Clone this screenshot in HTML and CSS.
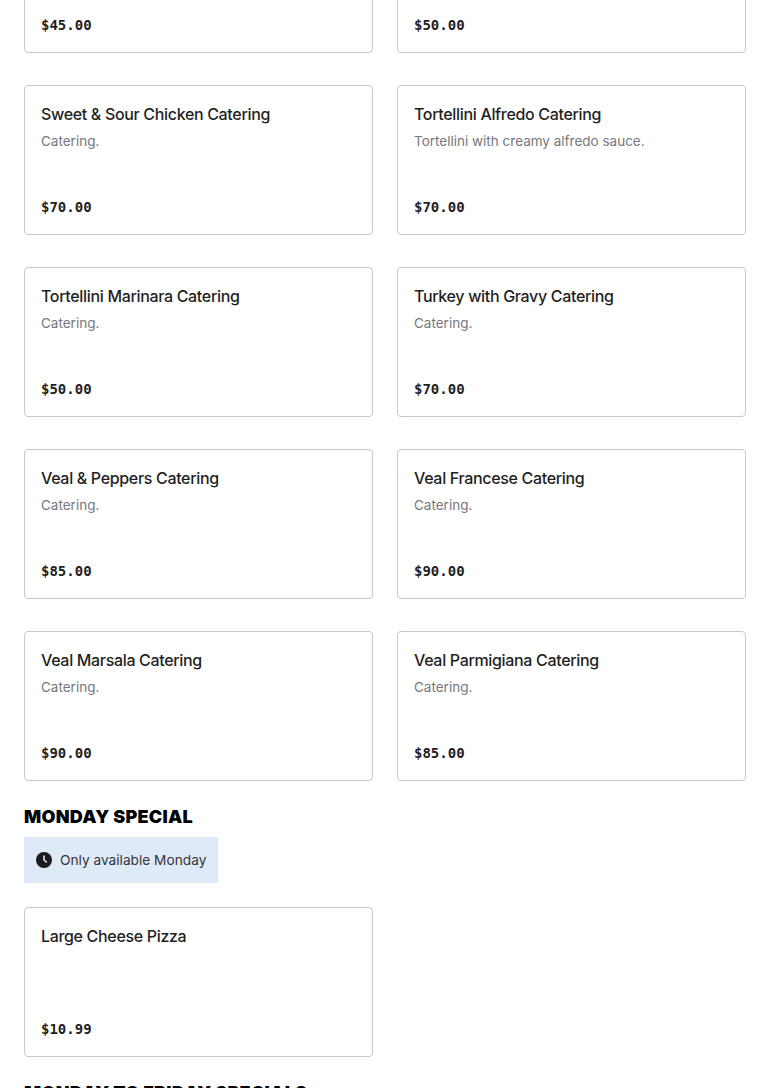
FILE: index.html
```html
<!DOCTYPE html>
<html>
  <head>
    <meta charset="utf-8">
    <title>Menu</title>
    <link rel="stylesheet" href="styles.css">
  </head>
  <body>
    <div id="menu">
      <div class="items">
        <div class="item"><span class="price">$45.00</span></div>
        <div class="item"><span class="price">$50.00</span></div>
        <div class="item">
          <h3>Sweet &amp; Sour Chicken Catering</h3>
          <p>Catering.</p>
          <span class="price">$70.00</span>
        </div>
        <div class="item">
          <h3>Tortellini Alfredo Catering</h3>
          <p>Tortellini with creamy alfredo sauce.</p>
          <span class="price">$70.00</span>
        </div>
        <div class="item">
          <h3>Tortellini Marinara Catering</h3>
          <p>Catering.</p>
          <span class="price">$50.00</span>
        </div>
        <div class="item">
          <h3>Turkey with Gravy Catering</h3>
          <p>Catering.</p>
          <span class="price">$70.00</span>
        </div>
        <div class="item">
          <h3>Veal &amp; Peppers Catering</h3>
          <p>Catering.</p>
          <span class="price">$85.00</span>
        </div>
        <div class="item">
          <h3>Veal Francese Catering</h3>
          <p>Catering.</p>
          <span class="price">$90.00</span>
        </div>
        <div class="item">
          <h3>Veal Marsala Catering</h3>
          <p>Catering.</p>
          <span class="price">$90.00</span>
        </div>
        <div class="item">
          <h3>Veal Parmigiana Catering</h3>
          <p>Catering.</p>
          <span class="price">$85.00</span>
        </div>
      </div>

      <h2>MONDAY SPECIAL</h2>
      <div class="notice">
        <svg class="clock" viewBox="0 0 16 16" width="16" height="16">
          <circle cx="8" cy="8" r="8" fill="#1b1b1f"/>
          <path d="M8 3.6V8l2.9 2.5" fill="none" stroke="#dfeaf8" stroke-width="1.6"/>
        </svg>
        <span>Only available Monday</span>
      </div>
      <div class="items">
        <div class="item">
          <h3>Large Cheese Pizza</h3>
          <span class="price">$10.99</span>
        </div>
      </div>

      <h2>MONDAY TO FRIDAY SPECIALS</h2>
    </div>
  </body>
</html>
```

FILE: styles.css
```css
*, *::before, *::after {
  padding: 0;
  margin: 0;
  box-sizing: border-box;
}

html, body {height: 1088px; overflow: hidden;}
body {background: #fff; color: #1f1f23; font-family: "Inter", "Liberation Sans", sans-serif;}

#menu {padding: 0 24px; margin-top: -97px;}

.items {display: grid; grid-template-columns: 1fr 1fr; gap: 32px 24px;}

.item {
  display: flex;
  flex-direction: column;
  height: 150px;
  padding: 16px;
  border: 1px solid #c9c9c9;
  border-radius: 4px;
}
.item h3 {font-size: 16px; line-height: 24px; font-weight: 550; letter-spacing: -0.33px;}
.item p {margin-top: 5px; font-size: 13.5px; line-height: 20px; color: #77777c;}
.item .price {
  margin-top: auto;
  padding-bottom: 1px;
  font-family: "DejaVu Sans Mono", "Liberation Mono", monospace;
  font-size: 14px;
  line-height: 20px;
  font-weight: 700;
}

h2 {
  margin-top: 24px;
  font-size: 18px;
  line-height: 24px;
  font-weight: 900;
  letter-spacing: 0.25px;
  color: #000;
}

.notice {
  display: inline-flex;
  align-items: center;
  gap: 8px;
  height: 46px;
  margin: 8px 0 24px;
  padding: 0 12px;
  background: #dfeaf8;
  font-size: 13.7px;
  color: #34343a;
}
.clock {flex-shrink: 0;}
```
